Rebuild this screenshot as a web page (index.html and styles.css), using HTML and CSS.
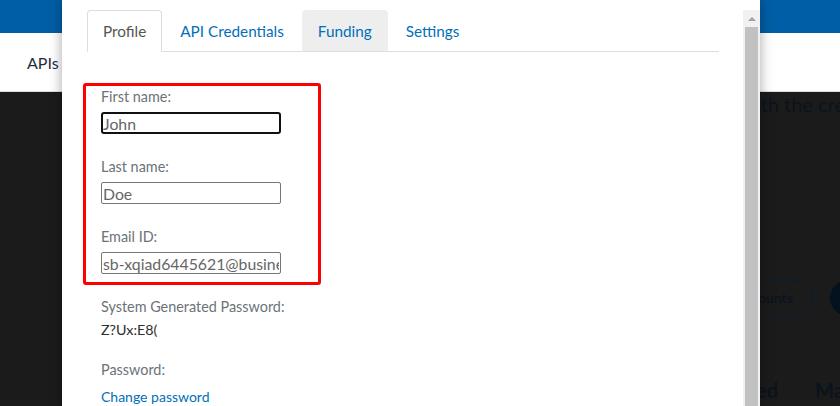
FILE: index.html
```html
<!DOCTYPE html>
<html lang="en">

<head>
    <meta charset="UTF-8">
    <meta name="viewport" content="width=device-width, initial-scale=1.0">
    <title>Sandbox Account</title>
    <link rel="stylesheet" href="styles.css">
</head>

<body>
    <header class="topbar"></header>
    <nav class="subnav">
        <span class="subnav-link">APIs</span>
    </nav>
    <main class="backdrop">
        <p class="intro">with the credentials below</p>
        <div class="actions">
            <span class="btn-outline">Manage Accounts</span>
            <span class="btn-filled">Create account</span>
        </div>
        <div class="columns">
            <span class="column-head">Created</span>
            <span class="column-head">Manage</span>
        </div>
    </main>

    <div class="modal">
        <div class="modal-body">
            <ul class="tabs">
                <li class="tab active">Profile</li>
                <li class="tab">API Credentials</li>
                <li class="tab hovered">Funding</li>
                <li class="tab">Settings</li>
            </ul>

            <div class="profile-form">
                <div class="highlight">
                    <div class="field">
                        <label for="first-name">First name:</label>
                        <input type="text" id="first-name" class="is-focused" value="John">
                    </div>
                    <div class="field">
                        <label for="last-name">Last name:</label>
                        <input type="text" id="last-name" value="Doe">
                    </div>
                    <div class="field">
                        <label for="email">Email ID:</label>
                        <input type="text" id="email" value="sb-xqiad6445621@business.example.com">
                    </div>
                </div>

                <div class="info">
                    <span class="info-label">System Generated Password:</span>
                    <span class="info-value">Z?Ux:E8(</span>
                </div>
                <div class="info">
                    <span class="info-label">Password:</span>
                    <a href="#" class="info-link">Change password</a>
                </div>
            </div>
        </div>
        <div class="scrollbar">
            <span class="scroll-arrow"></span>
            <span class="scroll-thumb"></span>
        </div>
    </div>
</body>

</html>
```

FILE: styles.css
```css
body {
    margin: 0;
    font-family: Lato, "Noto Sans", sans-serif;
    background-color: #1b1b1b;
    overflow: hidden;
}

.topbar {
    height: 33px;
    background-color: #005ea6;
}

.subnav {
    height: 58px;
    display: flex;
    align-items: center;
    padding-left: 27px;
    background-color: #fff;
    border-bottom: 1px solid #ddd;
    font-size: 16px;
    color: #1f2d3d;
}

.backdrop {
    height: 314px;
    background-color: #1b1b1b;
    color: #0b131c;
}

.intro {
    margin: 0;
    padding: 0 0 0 740px;
    font-size: 20px;
    line-height: 24px;
    white-space: nowrap;
}

.actions {
    display: flex;
    gap: 17px;
    margin-top: 164px;
    padding-left: 633px;
}

.btn-outline,
.btn-filled {
    flex-shrink: 0;
    height: 36px;
    box-sizing: border-box;
    border-radius: 18px;
    font-size: 14px;
    font-weight: bold;
    line-height: 34px;
    white-space: nowrap;
}

.btn-outline {
    width: 180px;
    padding-right: 19px;
    text-align: right;
    border: 1px solid #0a1c2e;
}

.btn-filled {
    padding: 0 20px;
    color: #1b1b1b;
    background-color: #04111e;
    border: 1px solid #04111e;
}

.columns {
    display: flex;
    gap: 37px;
    margin-top: 62px;
    padding-left: 578px;
    font-size: 20px;
    font-weight: bold;
    white-space: nowrap;
}

.column-head {
    flex-shrink: 0;
}

.column-head:first-child {
    width: 200px;
    text-align: right;
}

/* dialog */
.modal {
    position: absolute;
    top: 0;
    left: 62px;
    width: 698px;
    height: 406px;
    display: flex;
    background-color: #fff;
    box-shadow: 0 0 12px rgba(0, 0, 0, 0.35);
}

.modal-body {
    flex: 1;
    padding: 10px 24px 0 25px;
    overflow: hidden;
}

.scrollbar {
    width: 17px;
    margin-top: 10px;
    display: flex;
    flex-direction: column;
    align-items: center;
    background-color: #f1f1f1;
}

.scroll-arrow {
    width: 0;
    height: 0;
    margin: 7px 0 6px;
    border-left: 4px solid transparent;
    border-right: 4px solid transparent;
    border-bottom: 4px solid #a3a3a3;
}

.scroll-thumb {
    flex: 1;
    width: 13px;
    background-color: #c1c1c1;
}

.tabs {
    display: flex;
    margin: 0;
    padding: 0;
    list-style: none;
    border-bottom: 1px solid #ddd;
}

.tab {
    margin: 0 2px -1px 0;
    padding: 10px 15px;
    font-size: 15.3px;
    line-height: 20px;
    color: #0070ba;
    border: 1px solid transparent;
    border-radius: 4px 4px 0 0;
}

.tab.active {
    color: #555;
    background-color: #fff;
    border-color: #ddd #ddd transparent;
}

.tab.hovered {
    background-color: #eee;
    border-color: #eee #eee #ddd;
}

.profile-form {
    margin-top: 31px;
    padding-left: 14px;
}

.highlight {
    width: 180px;
    margin-left: -18px;
    padding: 1px 37px 8px 15px;
    border: 3px solid #f00;
    border-radius: 3px;
}

.field {
    display: flex;
    flex-direction: column;
    gap: 5px;
}

.field + .field {
    margin-top: 23px;
}

label,
.info-label {
    font-size: 14.4px;
    line-height: 20px;
    color: #6c7378;
}

input {
    width: 180px;
    height: 22px;
    box-sizing: border-box;
    margin: 0;
    padding: 0 1px;
    font-family: inherit;
    font-size: 15.8px;
    color: #666;
    border: 1px solid #767676;
    border-radius: 2px;
}

input.is-focused {
    border: 2px solid #111;
    border-radius: 3px;
    padding: 0;
}

.info {
    display: flex;
    flex-direction: column;
    margin-top: 12px;
}

.info + .info {
    margin-top: 20px;
}

.info-value {
    margin-top: 3px;
    font-size: 14.3px;
    line-height: 20px;
    color: #2c2e2f;
}

.info-link {
    margin-top: 7px;
    font-size: 14px;
    line-height: 20px;
    color: #0070ba;
    text-decoration: none;
}
```
